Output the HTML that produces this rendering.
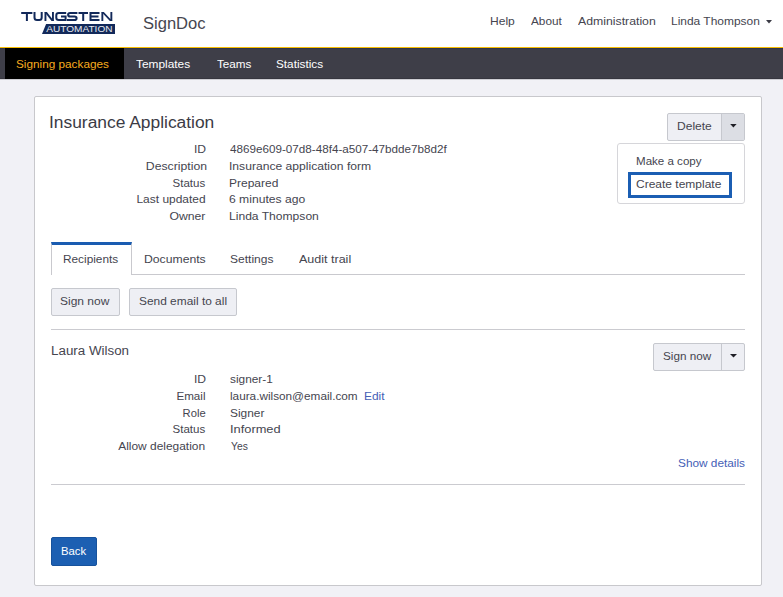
<!DOCTYPE html>
<html><head><meta charset="utf-8"><style>
html,body{margin:0;padding:0;}
body{width:783px;height:597px;overflow:hidden;position:relative;background:#f1f1f6;font-family:"Liberation Sans",sans-serif;}
.t{position:absolute;white-space:nowrap;line-height:1;}
.b{position:absolute;box-sizing:border-box;}
</style></head><body>
<div class="b" style="left:0;top:0;width:783px;height:47px;background:#fff"></div>
<div class="b" style="left:0;top:47px;width:783px;height:1px;background:#f7bd00"></div>
<div class="b" style="left:0;top:48px;width:783px;height:31px;background:#3e3e48;border-top:1px solid #32354b;border-bottom:1px solid #36363f"></div>
<div class="b" style="left:5px;top:48px;width:119px;height:31px;background:#000"></div>
<div class="b" style="left:0;top:79px;width:783px;height:1px;background:#cdcdd3"></div>
<!-- logo -->
<svg class="b" style="left:0;top:0" width="130" height="40" viewBox="0 0 130 40">
 <g fill="none" stroke="#12295a" stroke-width="2" stroke-linejoin="miter">
  <path d="M21.2,12.9H32.4M26.9,12.9V21"/>
  <path d="M34.5,12V17.6Q34.5,20.1 37,20.1H39.2Q41.7,20.1 41.7,17.6V12"/>
  
  <path d="M66.2,12.9H58.8Q56.3,12.9 56.3,15.2V17.8Q56.3,20.1 58.8,20.1H65.6V16.6H61"/>
  <path d="M77.4,12.9H70.2Q68.1,12.9 68.1,14.7Q68.1,16.5 70.2,16.5H74.5Q76.6,16.5 76.6,18.3Q76.6,20.1 74.5,20.1H67"/>
  <path d="M78.5,12.9H88M83.2,12.9V21"/>
  <path d="M99.5,12.9H90.5V20.1H99.5M90.5,16.5H98.5"/>
  
 </g>
 <g fill="#12295a">
  <polygon points="44.5,12 46.4,12 46.4,21 44.5,21"/><polygon points="52,12 53.9,12 53.9,21 52,21"/><polygon points="44.5,12 46.9,12 53.9,21 51.5,21"/>
  <polygon points="101.4,12 103.3,12 103.3,21 101.4,21"/><polygon points="110.4,12 112.3,12 112.3,21 110.4,21"/><polygon points="101.4,12 103.8,12 112.3,21 109.9,21"/>
 </g>
 <polygon points="46.1,24 115,24 115,34 42,34" fill="#12295a"/>
 <text x="46.3" y="32" font-family="Liberation Sans" font-size="8.5" fill="#e8eaf0" textLength="66.2" lengthAdjust="spacingAndGlyphs">AUTOMATION</text>
</svg>
<!-- header caret -->
<svg class="b" style="left:765px;top:19px" width="8" height="6"><polygon points="1,1 7,1 4,4.5" fill="#3b3b45"/></svg>
<!-- card -->
<div class="b" style="left:34px;top:96px;width:728px;height:490px;background:#fff;border:1px solid #c8c8cc;border-radius:2px"></div>
<!-- delete group -->
<div class="b" style="left:667px;top:113px;width:78px;height:28px;background:#eeeff4;border:1px solid #c6c8ce;border-radius:2px"></div>
<div class="b" style="left:721px;top:114px;width:23px;height:26px;background:#dcdee4;border-left:1px solid #c6c8ce"></div>
<svg class="b" style="left:729px;top:123px" width="9" height="6"><polygon points="1.2,1 7.6,1 4.4,4.4" fill="#1f1f26"/></svg>
<!-- dropdown -->
<div class="b" style="left:617px;top:143px;width:128px;height:61px;background:#fff;border:1px solid #d6d6da;border-radius:3px"></div>
<div class="b" style="left:628px;top:172px;width:104px;height:26px;border:3px solid #1b5eb3"></div>
<!-- tabs -->
<div class="b" style="left:51px;top:274px;width:694px;height:1px;background:#c9c9ce"></div>
<div class="b" style="left:51px;top:242px;width:81px;height:33px;background:#fff;border-left:1px solid #c9c9ce;border-right:1px solid #c9c9ce;border-top:3px solid #1a5cb1"></div>
<!-- buttons -->
<div class="b" style="left:51px;top:288px;width:69px;height:28px;background:#eeeff4;border:1px solid #c6c8ce;border-radius:2px"></div>
<div class="b" style="left:129px;top:288px;width:108px;height:28px;background:#eeeff4;border:1px solid #c6c8ce;border-radius:2px"></div>
<div class="b" style="left:51px;top:329px;width:694px;height:1px;background:#cbcbd0"></div>
<!-- split sign now -->
<div class="b" style="left:653px;top:343px;width:92px;height:28px;background:#eeeff4;border:1px solid #c6c8ce;border-radius:2px"></div>
<div class="b" style="left:721px;top:344px;width:1px;height:26px;background:#c6c8ce"></div>
<svg class="b" style="left:729px;top:353px" width="9" height="6"><polygon points="1,1 8,1 4.5,4.6" fill="#1f1f26"/></svg>
<div class="b" style="left:51px;top:484px;width:694px;height:1px;background:#cbcbd0"></div>
<!-- back -->
<div class="b" style="left:51px;top:537px;width:46px;height:29px;background:#1c5fb2;border:1px solid #17529c;border-radius:2px"></div>

<div class="t" style="left:143.00px;top:16px;font-size:16px;transform:scaleX(1.0339);transform-origin:left top;color:#464650;">SignDoc</div>
<div class="t" style="left:490.00px;top:16px;font-size:11px;transform:scaleX(1.0952);transform-origin:left top;color:#45454f;">Help</div>
<div class="t" style="left:531.00px;top:16px;font-size:11px;transform:scaleX(1.0690);transform-origin:left top;color:#45454f;">About</div>
<div class="t" style="left:578.00px;top:16px;font-size:11px;transform:scaleX(1.1159);transform-origin:left top;color:#45454f;">Administration</div>
<div class="t" style="left:671.00px;top:16px;font-size:11px;transform:scaleX(1.0866);transform-origin:left top;color:#45454f;">Linda Thompson</div>
<div class="t" style="left:16.00px;top:59px;font-size:11px;transform:scaleX(1.0698);transform-origin:left top;color:#f7ac1f;">Signing packages</div>
<div class="t" style="left:136.00px;top:59px;font-size:11px;transform:scaleX(1.0800);transform-origin:left top;color:#ffffff;">Templates</div>
<div class="t" style="left:217.00px;top:59px;font-size:11px;transform:scaleX(1.0625);transform-origin:left top;color:#ffffff;">Teams</div>
<div class="t" style="left:276.00px;top:59px;font-size:11px;transform:scaleX(1.0698);transform-origin:left top;color:#ffffff;">Statistics</div>
<div class="t" style="left:49.00px;top:115px;font-size:16px;transform:scaleX(1.0867);transform-origin:left top;color:#3b3b45;">Insurance Application</div>
<div class="t" style="left:677.00px;top:121px;font-size:11px;transform:scaleX(1.0939);transform-origin:left top;color:#45454f;">Delete</div>
<div class="t" style="left:636.00px;top:156px;font-size:11px;transform:scaleX(1.0509);transform-origin:left top;color:#45454f;">Make a copy</div>
<div class="t" style="left:636.00px;top:179px;font-size:11px;transform:scaleX(1.0909);transform-origin:left top;color:#45454f;">Create template</div>
<div class="t" style="left:63.40px;top:254px;font-size:11px;transform:scaleX(1.0749);transform-origin:left top;color:#45454f;">Recipients</div>
<div class="t" style="left:144.20px;top:254px;font-size:11px;transform:scaleX(1.1094);transform-origin:left top;color:#45454f;">Documents</div>
<div class="t" style="left:230.20px;top:254px;font-size:11px;transform:scaleX(1.0925);transform-origin:left top;color:#45454f;">Settings</div>
<div class="t" style="left:298.60px;top:254px;font-size:11px;transform:scaleX(1.1379);transform-origin:left top;color:#45454f;">Audit trail</div>
<div class="t" style="left:60.00px;top:296px;font-size:11px;transform:scaleX(1.0913);transform-origin:left top;color:#45454f;">Sign now</div>
<div class="t" style="left:139.00px;top:296px;font-size:11px;transform:scaleX(1.0825);transform-origin:left top;color:#45454f;">Send email to all</div>
<div class="t" style="left:50.60px;top:345px;font-size:12px;transform:scaleX(1.1146);transform-origin:left top;color:#45454f;">Laura Wilson</div>
<div class="t" style="left:663.00px;top:351px;font-size:11px;transform:scaleX(1.0639);transform-origin:left top;color:#45454f;">Sign now</div>
<div class="t" style="left:678.00px;top:458px;font-size:11px;transform:scaleX(1.0739);transform-origin:left top;color:#4560b6;">Show details</div>
<div class="t" style="left:60.80px;top:546px;font-size:11px;transform:scaleX(1.0270);transform-origin:left top;color:#ffffff;">Back</div>
<div class="t" style="left:363.60px;top:391px;font-size:11px;transform:scaleX(1.0840);transform-origin:left top;color:#4560b6;">Edit</div>
<div class="t" style="left:230.20px;top:144px;font-size:11px;transform:scaleX(1.0610);transform-origin:left top;color:#45454f;">4869e609-07d8-48f4-a507-47bdde7b8d2f</div>
<div class="t" style="left:229.20px;top:161px;font-size:11px;transform:scaleX(1.1016);transform-origin:left top;color:#45454f;">Insurance application form</div>
<div class="t" style="left:229.20px;top:178px;font-size:11px;transform:scaleX(1.0909);transform-origin:left top;color:#45454f;">Prepared</div>
<div class="t" style="left:229.20px;top:194px;font-size:11px;transform:scaleX(1.1029);transform-origin:left top;color:#45454f;">6 minutes ago</div>
<div class="t" style="left:229.20px;top:211px;font-size:11px;transform:scaleX(1.0989);transform-origin:left top;color:#45454f;">Linda Thompson</div>
<div class="t" style="left:229.60px;top:374px;font-size:11px;transform:scaleX(1.0776);transform-origin:left top;color:#45454f;">signer-1</div>
<div class="t" style="left:229.60px;top:391px;font-size:11px;transform:scaleX(1.0695);transform-origin:left top;color:#45454f;">laura.wilson@email.com</div>
<div class="t" style="left:229.60px;top:408px;font-size:11px;transform:scaleX(1.0840);transform-origin:left top;color:#45454f;">Signer</div>
<div class="t" style="left:229.60px;top:424px;font-size:11px;transform:scaleX(1.1667);transform-origin:left top;color:#45454f;">Informed</div>
<div class="t" style="left:230.60px;top:441px;font-size:11px;transform:scaleX(0.9365);transform-origin:left top;color:#45454f;">Yes</div>
<div class="t" style="right:577.40px;top:144px;font-size:11px;transform:scaleX(1.1000);transform-origin:right top;color:#45454f;">ID</div>
<div class="t" style="right:576.40px;top:161px;font-size:11px;transform:scaleX(1.1114);transform-origin:right top;color:#45454f;">Description</div>
<div class="t" style="right:577.40px;top:178px;font-size:11px;transform:scaleX(1.0468);transform-origin:right top;color:#45454f;">Status</div>
<div class="t" style="right:577.40px;top:194px;font-size:11px;transform:scaleX(1.0871);transform-origin:right top;color:#45454f;">Last updated</div>
<div class="t" style="right:577.40px;top:211px;font-size:11px;transform:scaleX(1.1101);transform-origin:right top;color:#45454f;">Owner</div>
<div class="t" style="right:577.40px;top:374px;font-size:11px;transform:scaleX(1.1000);transform-origin:right top;color:#45454f;">ID</div>
<div class="t" style="right:577.40px;top:391px;font-size:11px;transform:scaleX(1.0580);transform-origin:right top;color:#45454f;">Email</div>
<div class="t" style="right:577.40px;top:408px;font-size:11px;transform:scaleX(1.0193);transform-origin:right top;color:#45454f;">Role</div>
<div class="t" style="right:577.40px;top:424px;font-size:11px;transform:scaleX(1.0468);transform-origin:right top;color:#45454f;">Status</div>
<div class="t" style="right:577.40px;top:441px;font-size:11px;transform:scaleX(1.0851);transform-origin:right top;color:#45454f;">Allow delegation</div>
</body></html>
